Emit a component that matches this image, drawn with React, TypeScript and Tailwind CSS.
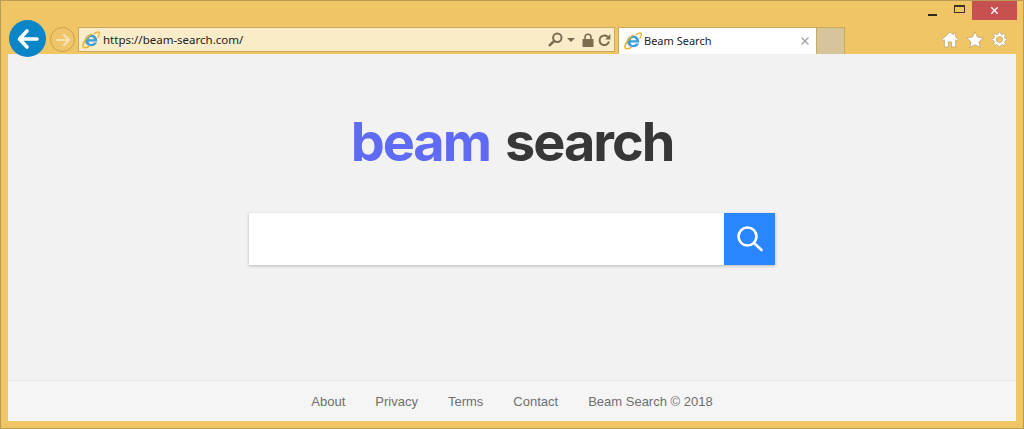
import { X } from 'lucide-react';

function IeLogo({ size = 18 }: { size?: number }) {
  return (
    <svg width={size} height={size} viewBox="0 0 18 18" fill="none" className="shrink-0">
      {/* the e */}
      <path
        d="M2.8 9.6C3 6 5.8 3.4 9.2 3.4c3.5 0 6 2.6 6 6.1v.9H6.6c.2 1.6 1.3 2.6 2.8 2.6 1.1 0 2-.5 2.5-1.4h3.1c-.8 2.3-3 3.7-5.6 3.7-3.6 0-6.2-2.4-6.6-5.7Zm3.9-1.3h5.3C11.8 6.9 10.8 6 9.4 6 8 6 7 6.9 6.7 8.3Z"
        fill="#3d9fdc"
        fillRule="evenodd"
      />
      {/* orbit ring */}
      <path d="M12.2 2.6C14.6.9 16.6.6 17.2 1.6c.5.9-.1 2.6-1.3 4.6" stroke="#efb32a" strokeWidth="1.3" strokeLinecap="round" />
      <path d="M9 3.4C5.4 5.4.6 11.8.9 15.2c.2 2 3 2.2 6.2.2" stroke="#efb32a" strokeWidth="1.6" strokeLinecap="round" />
    </svg>
  );
}

function BackArrow() {
  return (
    <svg width="24" height="22" viewBox="0 0 24 22" fill="none">
      <path d="M11 3 3.5 11l7.5 8M4 11h17" stroke="#fff" strokeWidth="3.6" strokeLinecap="round" strokeLinejoin="round" />
    </svg>
  );
}

function ForwardArrow() {
  return (
    <svg width="16" height="14" viewBox="0 0 16 14" fill="none">
      <path d="M9 2l5 5-5 5M14 7H2" stroke="#f8e3b2" strokeWidth="2.2" strokeLinecap="round" strokeLinejoin="round" />
    </svg>
  );
}

function AddressSearchIcon() {
  return (
    <svg width="15" height="15" viewBox="0 0 15 15" fill="none">
      <circle cx="9.3" cy="5.7" r="4.2" stroke="#7a6d50" strokeWidth="2" />
      <path d="M6.2 8.8 1.8 13.2" stroke="#7a6d50" strokeWidth="2.6" strokeLinecap="round" />
    </svg>
  );
}

function LockIcon() {
  return (
    <svg width="12" height="14" viewBox="0 0 12 14" fill="none">
      <path d="M3 6V4.2a3 3 0 0 1 6 0V6" stroke="#7a6d50" strokeWidth="1.6" />
      <rect x="0.5" y="6" width="11" height="8" fill="#7a6d50" />
    </svg>
  );
}

function RefreshIcon() {
  return (
    <svg width="13" height="14" viewBox="0 0 13 14" fill="none">
      <path d="M10.6 5A4.8 4.8 0 1 0 11 8.6" stroke="#7a6d50" strokeWidth="2" />
      <path d="M12.4 1v5.6H7.2Z" fill="#7a6d50" />
    </svg>
  );
}

function HomeIcon() {
  return (
    <svg width="18" height="17" viewBox="0 0 18 17">
      <path
        d="M9 1 1 8.6l1.2 1.2L3.4 8.8V16h4v-5h3.2v5h4V8.8l1.2 1 1.2-1.2L14.4 5.4V2h-2v1.5Z"
        fill="#fff"
        stroke="#a8945f"
        strokeWidth="0.6"
      />
    </svg>
  );
}

function StarIcon() {
  return (
    <svg width="18" height="17" viewBox="0 0 18 17">
      <path d="m9 .8 2.5 5.3 5.8.7-4.3 4 1.2 5.7L9 13.7l-5.2 2.8L5 10.8l-4.3-4 5.8-.7Z" fill="#fff" stroke="#a8945f" strokeWidth="0.6" />
    </svg>
  );
}

function GearIcon() {
  return (
    <svg width="17" height="17" viewBox="0 0 17 17" fill="none">
      <path
        d="M8.5 1v3M8.5 13v3M1 8.5h3M13 8.5h3M3.2 3.2l2.1 2.1M11.7 11.7l2.1 2.1M13.8 3.2l-2.1 2.1M5.3 11.7l-2.1 2.1"
        stroke="#a8945f"
        strokeWidth="3"
      />
      <circle cx="8.5" cy="8.5" r="4.4" stroke="#a8945f" strokeWidth="3" />
      <path
        d="M8.5 1.4v3M8.5 12.6v3M1.4 8.5h3M12.6 8.5h3M3.5 3.5l2 2M11.5 11.5l2 2M13.5 3.5l-2 2M5.5 11.5l-2 2"
        stroke="#fff"
        strokeWidth="2.2"
      />
      <circle cx="8.5" cy="8.5" r="4.4" stroke="#fff" strokeWidth="2.2" />
    </svg>
  );
}

function BigSearchIcon() {
  return (
    <svg width="28" height="28" viewBox="0 0 28 28" fill="none">
      <circle cx="11.5" cy="11.5" r="9" stroke="#fff" strokeWidth="2.6" />
      <path d="m18.5 18.5 7 6.5" stroke="#fff" strokeWidth="2.6" strokeLinecap="round" />
    </svg>
  );
}

const footerLinks = ['About', 'Privacy', 'Terms', 'Contact', 'Beam Search © 2018'];

export default function App() {
  return (
    <div className="flex h-[429px] w-[1024px] flex-col overflow-hidden border border-[#b89c55] bg-[#f0c566] font-['Liberation_Sans',sans-serif]">
      {/* ══ BROWSER CHROME ══ */}
      <header className="relative h-[53px] shrink-0">
        <div className="flex justify-end pr-[6px]">
          <div className="flex h-[19px] items-center">
            <span className="mr-[17px] mt-[8px] h-[2px] w-[9px] bg-[#2e2a20]" />
            <span className="mr-[7px] mb-[4px] h-[8px] w-[11px] border border-t-2 border-[#3a3425]" />
            <span className="flex h-[19px] w-[45px] items-center justify-center bg-[#c75050]">
              <X size={11} strokeWidth={3} className="text-white" />
            </span>
          </div>
        </div>

        <div className="absolute bottom-0 left-[8px] right-[6px] flex items-end">
          <div className="z-10 mb-[-3px] flex h-[37px] w-[37px] shrink-0 items-center justify-center rounded-full bg-[#0a85c7]">
            <BackArrow />
          </div>
          <div className="mb-[2px] ml-[4px] flex h-[25px] w-[25px] shrink-0 items-center justify-center rounded-full border border-[#c9a04a] bg-[#efc56a]">
            <ForwardArrow />
          </div>
          <div className="mb-[2px] ml-[3px] flex h-[25px] w-[537px] shrink-0 items-center border border-[#c9a95a] bg-[#faebc9] pl-[3px] pr-[3px]">
            <IeLogo />
            <span className="ml-[3px] text-[11.5px] text-[#222] font-['Noto_Sans',sans-serif]">https://beam-search.com/</span>
            <div className="ml-auto flex items-center">
              <AddressSearchIcon />
              <span className="ml-[4px] h-0 w-0 border-x-[4px] border-t-[4px] border-x-transparent border-t-[#7a6d50]" />
              <span className="ml-[7px] flex"><LockIcon /></span>
              <span className="ml-[4px] flex"><RefreshIcon /></span>
            </div>
          </div>
          <div className="ml-[3px] flex h-[27px] w-[199px] shrink-0 items-center border-x border-t border-[#c9a95a] bg-white pl-[5px] pr-[5px]">
            <IeLogo />
            <span className="ml-[2px] mt-[1px] text-[11px] text-[#222] font-['Noto_Sans',sans-serif]">Beam Search</span>
            <X size={12} strokeWidth={3} className="ml-auto text-[#a5a5a5]" />
          </div>
          <div className="h-[27px] w-[28px] shrink-0 border-r border-t border-[#c9a95a] bg-[#d6c59b]" />
          <div className="mb-[6px] ml-auto flex items-center gap-[7px] pr-[9px]">
            <HomeIcon />
            <StarIcon />
            <GearIcon />
          </div>
        </div>
      </header>

      {/* ══ PAGE ══ */}
      <main className="mx-[7px] flex h-[367px] shrink-0 flex-col bg-[#f2f2f2]">
        <div className="flex flex-1 flex-col items-center">
          <h1 className="mt-[51px] flex h-[74px] items-center gap-[15px] text-[54px] font-bold leading-none tracking-[-2px] font-['Inter',sans-serif]">
            <span className="text-[#5f6af5]">beam</span>
            <span className="text-[#373737]">search</span>
          </h1>
          <div className="mt-[34px] flex h-[52px] w-[526px] bg-white shadow-[0_1px_3px_rgba(0,0,0,0.25)]">
            <div className="flex-1" />
            <div className="flex w-[51px] items-center justify-center bg-[#2a86ff]">
              <BigSearchIcon />
            </div>
          </div>
        </div>
        <footer className="flex h-[41px] items-center justify-center gap-[30px] border-t border-[#e9e9e9] bg-[#f5f5f5] pt-[2px] text-[13px] text-[#6f6f6f]">
          {footerLinks.map((link) => (
            <span key={link}>{link}</span>
          ))}
        </footer>
      </main>
    </div>
  );
}
